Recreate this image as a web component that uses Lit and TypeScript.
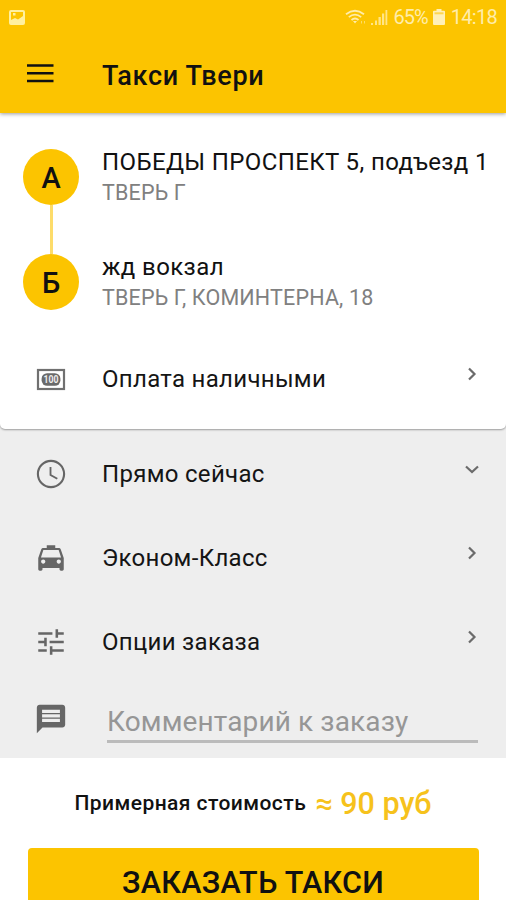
import { LitElement, html, css, svg } from "lit";
import { customElement, property } from "lit/decorators.js";

const icons: Record<string, unknown> = {
  clock: svg`<path d="M11.99 2C6.47 2 2 6.48 2 12s4.47 10 9.99 10C17.52 22 22 17.52 22 12S17.52 2 11.99 2zM12 20.500a8.500 8.500 0 1 1 0-17 8.500 8.500 0 0 1 0 17zM12.300 7H11v6l5.100 2.900.7-1.100-4.500-2.500z"/>`,
  taxi: svg`<path d="M18.92 6.01C18.72 5.42 18.16 5 17.5 5H15V3H9v2H6.5c-.66 0-1.21.42-1.42 1.01L3 12v8c0 .55.45 1 1 1h1c.55 0 1-.45 1-1v-1h12v1c0 .55.45 1 1 1h1c.55 0 1-.45 1-1v-8l-2.08-5.99zM6.5 16c-.83 0-1.5-.67-1.5-1.5S5.67 13 6.5 13s1.5.67 1.5 1.5S7.33 16 6.5 16zm11 0c-.83 0-1.5-.67-1.5-1.5s.67-1.5 1.5-1.5 1.5.67 1.5 1.5-.67 1.5-1.5 1.5zM4.900 11.600l1.700-5.200h10.800l1.700 5.200H4.900z"/>`,
  tune: svg`<path d="M3 17.100v1.700h6v-1.700H3zM3 5.100v1.700h10V5.100H3zm10 15.900v-2.200h8v-1.700h-8V15h-1.800v6H13zM7.200 9v2.100H3v1.700h4.200V15H9V9H7.200zM21 12.800v-1.700H11v1.700h10zM15.200 9H17V6.800h4V5.100h-4V3h-1.800v6z"/>`,
  chat: svg`<path fill-rule="evenodd" d="M4 2h16c1.100 0 2 .9 2 2v12c0 1.100-.9 2-2 2H6l-4 4V4c0-1.100.9-2 2-2zM5.700 5.500v2.200h12.600V5.500zM5.700 8.700v2.200h12.600V8.700zM5.700 11.900v2.200h12.600v-2.200z"/>`,
};

@customElement("app-icon")
export class AppIcon extends LitElement {
  @property() name = "";
  static styles = css`
    :host { display: block; width: 34px; height: 34px; }
    svg { display: block; width: 34px; height: 34px; fill: #666; }
    .note { font: 700 10px Roboto, sans-serif; fill: #eee; }
  `;
  render() {
    if (this.name === "cash") {
      return html`<svg viewBox="0 0 34 34">
        <rect x="4" y="8" width="26" height="19" fill="none" stroke="#707070" stroke-width="2.200"/>
        <rect x="7.600" y="11.200" width="18.800" height="12.600" rx="5.500" fill="#6a6a6a"/>
        <text class="note" x="17" y="21" text-anchor="middle" textLength="15" lengthAdjust="spacingAndGlyphs">100</text>
      </svg>`;
    }
    return html`<svg viewBox="0 0 24 24">${icons[this.name]}</svg>`;
  }
}

@customElement("option-row")
export class OptionRow extends LitElement {
  @property() icon = "";
  @property() label = "";
  @property() direction = "right";
  static styles = css`
    :host { display: grid; grid-template-columns: 102px 1fr 69px; align-items: center; height: 84px; }
    app-icon { margin: 0 0 1px 34px; }
    .label { font-size: 24px; line-height: 32px; letter-spacing: 0.300px; color: #151515; white-space: nowrap; }
    .chevron { display: block; width: 16px; height: 16px; margin: 0 0 10px 27px; fill: none; stroke: #6b6b6b; stroke-width: 2.200; }
  `;
  render() {
    return html`
      <app-icon name=${this.icon}></app-icon>
      <span class="label">${this.label}</span>
      <svg class="chevron" viewBox="0 0 16 16">
        <path d=${this.direction === "down" ? "M2 5.500l6 5.500 6-5.500" : "M5 2.500l5.500 5.500L5 13.500"} />
      </svg>
    `;
  }
}

@customElement("app-root")
export class AppRoot extends LitElement {
  static styles = css`
    :host { display: flex; flex-direction: column; height: 900px; overflow: hidden; background: #eee; font-family: Roboto, sans-serif; color: #111; }
    header { position: relative; z-index: 2; flex: none; height: 113px; background: #fcc400; box-shadow: 0 1px 4px rgba(0, 0, 0, 0.4); }
    .status { display: flex; align-items: center; height: 34px; padding: 0 9px 0 8px; color: #ffedaa; font-size: 20px; }
    .status svg { display: block; flex: none; }
    .picture { margin-right: auto; }
    .signal { margin-left: 5px; }
    .percent { margin-left: 6px; letter-spacing: -1px; }
    .battery { margin-left: 5px; }
    .time { margin-left: 6px; letter-spacing: -0.700px; }
    .bar { display: flex; align-items: center; height: 78px; padding-left: 27px; }
    .menu { display: block; }
    h1 { margin: 6px 0 0 48px; font-size: 27px; line-height: 34px; font-weight: 500; letter-spacing: 0.650px; white-space: nowrap; }
    .card { position: relative; z-index: 1; flex: none; height: 316px; background: #fff; border-radius: 0 0 5px 5px; box-shadow: 0 1px 2px rgba(0, 0, 0, 0.35); }
    .route { display: grid; grid-template-columns: 102px 1fr; height: 224px; }
    .stops { display: flex; flex-direction: column; align-items: center; padding-top: 36px; }
    .stop { flex: none; width: 56px; height: 56px; border-radius: 50%; background: #fcc400; font-size: 29px; line-height: 59px; font-weight: 500; text-align: center; }
    .link { flex: none; width: 3px; height: 49px; background: #fddc6a; }
    .addresses { padding-top: 33px; white-space: nowrap; }
    .address { height: 105px; }
    .street { font-size: 24px; line-height: 32px; }
    .city { font-size: 21.500px; line-height: 30px; letter-spacing: 0.170px; color: #808080; }
    .first { letter-spacing: 0.380px; }
    .second { letter-spacing: 0.400px; }
    .options { flex: none; box-sizing: border-box; height: 329px; padding-top: 3px; background: #eee; }
    .comment { display: grid; grid-template-columns: 107px 371px; }
    .comment app-icon { margin: 18px 0 0 34px; }
    .field { height: 40px; margin-top: 16px; border-bottom: 3px solid #bbb; font-size: 28px; line-height: 43px; letter-spacing: 0.120px; color: #969696; white-space: nowrap; }
    .footer { flex: none; height: 142px; display: flex; flex-direction: column; align-items: center; overflow: hidden; background: #fff; }
    .cost { flex: none; display: flex; align-items: center; justify-content: center; height: 90px; font-weight: 500; white-space: nowrap; }
    .caption { margin-bottom: 1px; font-size: 21px; letter-spacing: 0.440px; }
    .price { margin-left: 9px; font-size: 30.500px; color: #f6c21c; }
    .order { flex: none; box-sizing: border-box; width: 451px; height: 70px; border: 0; border-radius: 4px; background: #fcc400; font: 500 30.500px/70px Roboto, sans-serif; text-align: center; color: #111; padding: 0; letter-spacing: 0.270px; }
  `;
  render() {
    return html`
      <header>
        <div class="status">
          <svg class="picture" width="18" height="17" viewBox="0 0 18 17">
            <path fill="#fff0a0" fill-rule="evenodd" d="M3 1h12a2 2 0 0 1 2 2v11a2 2 0 0 1-2 2H3a2 2 0 0 1-2-2V3a2 2 0 0 1 2-2zM3 3v8l4-2 3 1.500L15 7V3zM5 4h2.500v2.500H5z"/>
          </svg>
          <svg width="21" height="17" viewBox="0 0 21 17" fill="none" stroke="#ffedaa" stroke-width="1.800">
            <path d="M1 5.200Q10 -1.800 19 5.200M3.800 8.100Q10 3.200 16.200 8.100M6.500 11Q10 8 13.500 11"/>
            <path d="M8 12h4l-2 2.500z" fill="#ffedaa" stroke="none"/>
            <path d="M16.500 12v2.500M19.500 12v2.500" stroke-width="1" opacity=".6"/>
          </svg>
          <svg class="signal" width="17" height="17" viewBox="0 0 17 17" fill="#ffe588">
            <path d="M0 14h2v2H0zM4 11.500h2V16H4zM7.500 8h2.300v8H7.500zM11 4.500h2.200V16H11zM14.500 1h1.800v15h-1.800z"/>
          </svg>
          <span class="percent">65%</span>
          <svg class="battery" width="12" height="18" viewBox="0 0 12 18" fill="#fff0b8">
            <path d="M3.500 1h5v1.800H11a1 1 0 0 1 1 1V16a1 1 0 0 1-1 1H1a1 1 0 0 1-1-1V3.800a1 1 0 0 1 1-1h2.500z"/>
            <path d="M1.500 4.300h9v2h-9z" fill="#fdd650"/>
          </svg>
          <span class="time">14:18</span>
        </div>
        <div class="bar">
          <svg class="menu" width="27" height="19" viewBox="0 0 27 19" stroke="#111" stroke-width="2.500"><path d="M0 1.500h26.500M0 9.300h26.500M0 17h26.500"/></svg>
          <h1>Такси Твери</h1>
        </div>
      </header>
      <section class="card">
        <div class="route">
          <div class="stops">
            <div class="stop">А</div>
            <div class="link"></div>
            <div class="stop">Б</div>
          </div>
          <div class="addresses">
            <div class="address">
              <div class="street first">ПОБЕДЫ ПРОСПЕКТ 5, подъезд 1</div>
              <div class="city">ТВЕРЬ Г</div>
            </div>
            <div class="address">
              <div class="street second">жд вокзал</div>
              <div class="city">ТВЕРЬ Г, КОМИНТЕРНА, 18</div>
            </div>
          </div>
        </div>
        <option-row icon="cash" label="Оплата наличными"></option-row>
      </section>
      <section class="options">
        <option-row icon="clock" label="Прямо сейчас" direction="down"></option-row>
        <option-row icon="taxi" label="Эконом-Класс"></option-row>
        <option-row icon="tune" label="Опции заказа"></option-row>
        <div class="comment">
          <app-icon name="chat"></app-icon>
          <div class="field">Комментарий к заказу</div>
        </div>
      </section>
      <section class="footer">
        <div class="cost">
          <span class="caption">Примерная стоимость</span>
          <span class="price">≈ 90 руб</span>
        </div>
        <button class="order">ЗАКАЗАТЬ ТАКСИ</button>
      </section>
    `;
  }
}
